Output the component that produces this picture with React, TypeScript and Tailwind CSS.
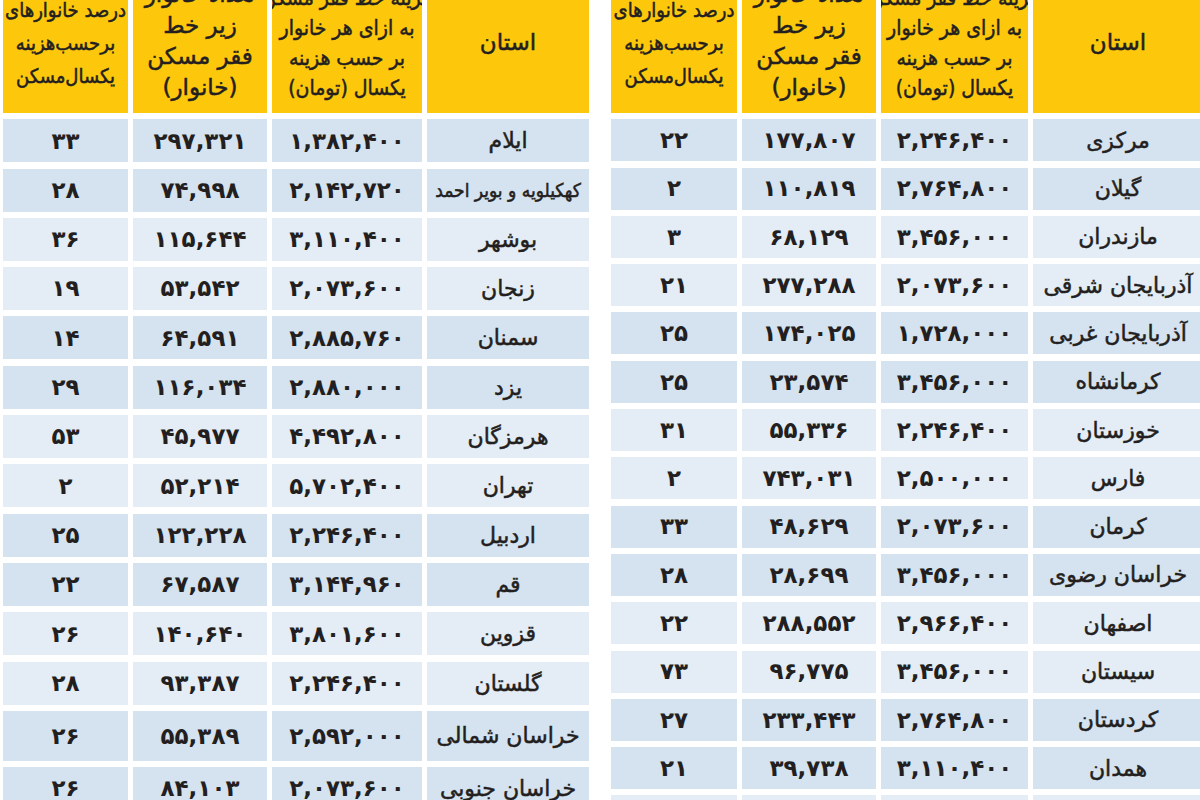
import React from 'react';

type Row = [string, string, string, string];

// [percent, households, cost, province]
const leftRows: Row[] = [
  ['۳۳', '۲۹۷,۳۲۱', '۱,۳۸۲,۴۰۰', 'ایلام'],
  ['۲۸', '۷۴,۹۹۸', '۲,۱۴۲,۷۲۰', 'کهکیلویه و بویر احمد'],
  ['۳۶', '۱۱۵,۶۴۴', '۳,۱۱۰,۴۰۰', 'بوشهر'],
  ['۱۹', '۵۳,۵۴۲', '۲,۰۷۳,۶۰۰', 'زنجان'],
  ['۱۴', '۶۴,۵۹۱', '۲,۸۸۵,۷۶۰', 'سمنان'],
  ['۲۹', '۱۱۶,۰۳۴', '۲,۸۸۰,۰۰۰', 'یزد'],
  ['۵۳', '۴۵,۹۷۷', '۴,۴۹۲,۸۰۰', 'هرمزگان'],
  ['۲', '۵۲,۲۱۴', '۵,۷۰۲,۴۰۰', 'تهران'],
  ['۲۵', '۱۲۲,۲۲۸', '۲,۲۴۶,۴۰۰', 'اردبیل'],
  ['۲۲', '۶۷,۵۸۷', '۳,۱۴۴,۹۶۰', 'قم'],
  ['۲۶', '۱۴۰,۶۴۰', '۳,۸۰۱,۶۰۰', 'قزوین'],
  ['۲۸', '۹۳,۳۸۷', '۲,۲۴۶,۴۰۰', 'گلستان'],
  ['۲۶', '۵۵,۳۸۹', '۲,۵۹۲,۰۰۰', 'خراسان شمالی'],
  ['۲۶', '۸۴,۱۰۳', '۲,۰۷۳,۶۰۰', 'خراسان جنوبی'],
];

const rightRows: Row[] = [
  ['۲۲', '۱۷۷,۸۰۷', '۲,۲۴۶,۴۰۰', 'مرکزی'],
  ['۲', '۱۱۰,۸۱۹', '۲,۷۶۴,۸۰۰', 'گیلان'],
  ['۳', '۶۸,۱۲۹', '۳,۴۵۶,۰۰۰', 'مازندران'],
  ['۲۱', '۲۷۷,۲۸۸', '۲,۰۷۳,۶۰۰', 'آذربایجان شرقی'],
  ['۲۵', '۱۷۴,۰۲۵', '۱,۷۲۸,۰۰۰', 'آذربایجان غربی'],
  ['۲۵', '۲۳,۵۷۴', '۳,۴۵۶,۰۰۰', 'کرمانشاه'],
  ['۳۱', '۵۵,۳۳۶', '۲,۲۴۶,۴۰۰', 'خوزستان'],
  ['۲', '۷۴۳,۰۳۱', '۲,۵۰۰,۰۰۰', 'فارس'],
  ['۳۳', '۴۸,۶۲۹', '۲,۰۷۳,۶۰۰', 'کرمان'],
  ['۲۸', '۲۸,۶۹۹', '۳,۴۵۶,۰۰۰', 'خراسان رضوی'],
  ['۲۲', '۲۸۸,۵۵۲', '۲,۹۶۶,۴۰۰', 'اصفهان'],
  ['۷۳', '۹۶,۷۷۵', '۳,۴۵۶,۰۰۰', 'سیستان'],
  ['۲۷', '۲۳۳,۴۴۳', '۲,۷۶۴,۸۰۰', 'کردستان'],
  ['۲۱', '۳۹,۷۳۸', '۳,۱۱۰,۴۰۰', 'همدان'],
  ['', '', '', ''],
];

const font = "font-['DejaVu_Sans','DejaVu_Sans_Condensed',sans-serif]";
const condensed = "font-['DejaVu_Sans_Condensed','DejaVu_Sans',sans-serif]";
const stroke = '[-webkit-text-stroke:0.5px_#231f20]';

function Header({ cols }: { cols: string }) {
  return (
    <div className={`grid ${cols} gap-x-[5px] h-[113px] text-[#231f20] ${font} ${stroke}`}>
      <div className="bg-[#fdc70c] overflow-hidden flex flex-col items-center">
        <div dir="rtl" className={`-mt-[6px] flex flex-col items-center text-[20px] leading-[33px] tracking-[-0.8px] whitespace-nowrap ${condensed}`}>
          <span>درصد خانوارهای</span>
          <span>برحسب‌هزینه</span>
          <span>یکسال‌مسکن</span>
        </div>
      </div>
      <div className="bg-[#fdc70c] overflow-hidden flex flex-col items-center">
        <div dir="rtl" className="-mt-[21px] flex flex-col items-center text-[23px] leading-[31px] whitespace-nowrap">
          <span>تعداد خانوار</span>
          <span>زیر خط</span>
          <span>فقر مسکن</span>
          <span>(خانوار)</span>
        </div>
      </div>
      <div className="bg-[#fdc70c] overflow-hidden flex flex-col items-center">
        <div dir="rtl" className={`-mt-[17px] flex flex-col items-center text-[21px] leading-[30px] tracking-[-0.3px] whitespace-nowrap ${condensed}`}>
          <span>هزینه خط فقر مسکن</span>
          <span>به ازای هر خانوار</span>
          <span>بر حسب هزینه</span>
          <span>یکسال (تومان)</span>
        </div>
      </div>
      <div className="bg-[#fdc70c] flex justify-center">
        <span dir="rtl" className="mt-[27px] text-[23px] leading-[30px]">استان</span>
      </div>
    </div>
  );
}

function Table({ rows, cols, rowH, gap, tallRow }: { rows: Row[]; cols: string; rowH: string; gap: string; tallRow?: number }) {
  return (
    <div className={`flex flex-col ${gap}`}>
      <Header cols={cols} />
      {rows.map((r, i) => {
        const dark = i % 4 < 2;
        const bg = dark ? 'bg-[#d5e2ef]' : 'bg-[#e4ecf5]';
        const h = i === tallRow ? 'h-[50px]' : rowH;
        const nameSize = r[3].length > 16 ? `text-[19px] tracking-[-0.8px] ${condensed}` : 'text-[22px]';
        return (
          <div key={i} className={`grid ${cols} gap-x-[5px] ${h} shrink-0 text-[#231f20] ${font}`}>
            <div className={`${bg} flex items-center justify-center text-[23px] font-bold tracking-[2px]`}>{r[0]}</div>
            <div className={`${bg} flex items-center justify-center text-[23px] font-bold tracking-[2px]`}>{r[1]}</div>
            <div className={`${bg} flex items-center justify-center text-[23px] font-bold tracking-[2px]`}>{r[2]}</div>
            <div dir="rtl" className={`${bg} flex items-center justify-center ${nameSize} ${stroke} whitespace-nowrap overflow-hidden`}>
              {r[3]}
            </div>
          </div>
        );
      })}
    </div>
  );
}

export default function App() {
  return (
    <div className="w-[1200px] h-[800px] overflow-hidden bg-white flex items-start">
      <div className="ml-[3px]">
        <Table
          rows={leftRows}
          cols="grid-cols-[125px_134px_150px_162px]"
          rowH="h-[43px]"
          gap="gap-y-[6.3px]"
          tallRow={12}
        />
      </div>
      <div className="ml-[22px]">
        <Table
          rows={rightRows}
          cols="grid-cols-[126px_134px_147px_170px]"
          rowH="h-[42px]"
          gap="gap-y-[6.3px]"
        />
      </div>
    </div>
  );
}
